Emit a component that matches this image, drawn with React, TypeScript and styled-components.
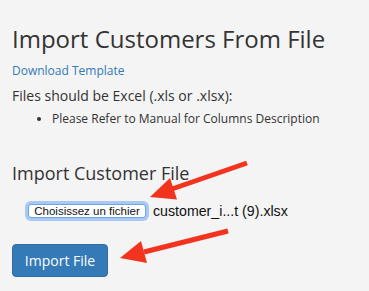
import styled, { createGlobalStyle } from "styled-components";

const GlobalStyle = createGlobalStyle`
  html, body {
    margin: 0;
    padding: 0;
    background: #f4f4f4;
  }
  body {
    font-family: "Open Sans", "DejaVu Sans", sans-serif;
    color: #333;
  }
`;

const App = () => {
  return (
    <Page>
      <GlobalStyle />
      <Title>Import Customers From File</Title>
      <TemplateLink href="#">Download Template</TemplateLink>
      <Note>Files should be Excel (.xls or .xlsx):</Note>
      <Bullets>
        <li>Please Refer to Manual for Columns Description</li>
      </Bullets>
      <SubTitle>Import Customer File</SubTitle>
      <FileRow>
        <ChooseButton>Choisissez un fichier</ChooseButton>
        <FileName>customer_i...t (9).xlsx</FileName>
      </FileRow>
      <SubmitButton>Import File</SubmitButton>
      <Arrows viewBox="0 0 369 291">
        <line x1="247" y1="163" x2="172" y2="189" />
        <polygon points="150,197 177,199.5 170,178" />
        <line x1="228" y1="231" x2="144" y2="252" />
        <polygon points="120,258 147,263 141,241" />
      </Arrows>
    </Page>
  );
};
export default App;

const Page = styled.div`
  position: relative;
  width: 369px;
  height: 291px;
  padding: 23px 12px 0;
  box-sizing: border-box;
  overflow: hidden;
`;

const Title = styled.h1`
  margin: 0;
  font-size: 24px;
  font-weight: 400;
  line-height: 32px;
`;

const TemplateLink = styled.a`
  display: block;
  margin-top: 7px;
  font-size: 12px;
  line-height: 17px;
  color: #337ab7;
  text-decoration: none;
`;

const Note = styled.p`
  margin: 7px 0 0;
  font-size: 14px;
  line-height: 20px;
`;

const Bullets = styled.ul`
  margin: 4px 0 0;
  padding-left: 40px;
  font-size: 12px;
  line-height: 18px;
`;

const SubTitle = styled.h3`
  margin: 33px 0 0;
  font-size: 18px;
  font-weight: 400;
  line-height: 24px;
`;

const FileRow = styled.div`
  display: flex;
  align-items: center;
  gap: 4px;
  height: 20px;
  margin: 16px 0 0 13px;
`;

const ChooseButton = styled.button`
  box-sizing: border-box;
  width: 118px;
  height: 14px;
  margin: 0 3px;
  padding: 0;
  background: #fff;
  border: 1px solid #6ea3ea;
  border-radius: 3px;
  box-shadow: 0 0 0 3px #a7c9f3;
  font-family: "Liberation Sans", Arial, sans-serif;
  font-size: 11.5px;
  line-height: 12px;
  color: #111;
`;

const FileName = styled.span`
  font-family: "Liberation Sans", Arial, sans-serif;
  font-size: 14.2px;
  line-height: 16px;
  color: #111;
`;

const SubmitButton = styled.button`
  display: block;
  margin-top: 23px;
  width: 96px;
  height: 33px;
  background: #337ab7;
  border: 1px solid #2e6da4;
  border-radius: 4px;
  color: #fff;
  font-family: "Open Sans", sans-serif;
  font-size: 14px;
`;

const Arrows = styled.svg`
  position: absolute;
  left: 0;
  top: 0;
  width: 369px;
  height: 291px;
  pointer-events: none;

  line {
    stroke: #f2341f;
    stroke-width: 5;
  }
  polygon {
    fill: #f2341f;
  }
`;
